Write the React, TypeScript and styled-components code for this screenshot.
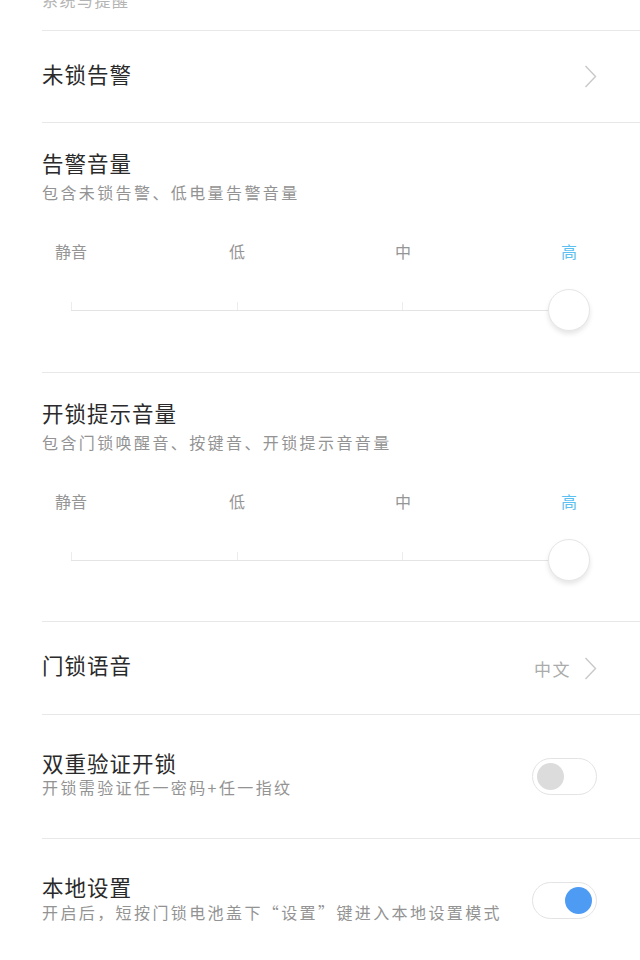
import styled, { createGlobalStyle } from 'styled-components';

const GlobalStyle = createGlobalStyle`
  body {
    margin: 0;
    background: #ffffff;
    font-family: 'Noto Sans CJK SC', 'Noto Sans', sans-serif;
    overflow: hidden;
  }
`;

const LEVELS = ['静音', '低', '中', '高'];

const Chevron = () => (
  <svg width='13' height='23' viewBox='0 0 13 23'>
    <polyline
      points='1.5,1 11.5,11.5 1.5,22'
      fill='none'
      stroke='#c9c9c9'
      strokeWidth='1.4'
    />
  </svg>
);

const VolumeSlider = ({ value }: { value: number }) => (
  <>
    <Labels>
      {LEVELS.map((label, i) => (
        <Level key={label} active={i === value}>
          {label}
        </Level>
      ))}
    </Labels>
    <SliderArea>
      <Track />
      <Ticks>
        {LEVELS.map((label) => (
          <Tick key={label} />
        ))}
      </Ticks>
      <Thumb style={{ left: `${(value / (LEVELS.length - 1)) * 100}%` }} />
    </SliderArea>
  </>
);

const App = () => {
  return (
    <Page>
      <GlobalStyle />
      <Header>系统与提醒</Header>

      <Row height={91}>
        <RowTitle>未锁告警</RowTitle>
        <Right>
          <Chevron />
        </Right>
      </Row>

      <Section bottom={41}>
        <TextBlock gap={6}>
          <Title>告警音量</Title>
          <Sub>包含未锁告警、低电量告警音量</Sub>
        </TextBlock>
        <VolumeSlider value={3} />
      </Section>

      <Section bottom={40}>
        <TextBlock gap={6}>
          <Title>开锁提示音量</Title>
          <Sub>包含门锁唤醒音、按键音、开锁提示音音量</Sub>
        </TextBlock>
        <VolumeSlider value={3} />
      </Section>

      <Row height={92}>
        <RowTitle>门锁语音</RowTitle>
        <Right>
          <Value>中文</Value>
          <Chevron />
        </Right>
      </Row>

      <Row height={123}>
        <TextBlock gap={1} lift={6}>
          <Title>双重验证开锁</Title>
          <Sub>开锁需验证任一密码+任一指纹</Sub>
        </TextBlock>
        <Toggle on={false}>
          <Knob on={false} />
        </Toggle>
      </Row>

      <Row height={123} last>
        <TextBlock gap={2} lift={6}>
          <Title>本地设置</Title>
          <Sub>开启后，短按门锁电池盖下“设置”键进入本地设置模式</Sub>
        </TextBlock>
        <Toggle on={true}>
          <Knob on={true} />
        </Toggle>
      </Row>
    </Page>
  );
};

export default App;

const Page = styled.div`
  display: flex;
  flex-direction: column;
  padding-left: 42px;
  width: 640px;
  box-sizing: border-box;
`;

const Header = styled.div`
  margin-top: -11px;
  padding-bottom: 19px;
  font-size: 16px;
  line-height: 22px;
  letter-spacing: 1.5px;
  color: #b4b4b4;
  border-bottom: 1px solid #e8e8e8;
`;

const Row = styled.div<{ height: number; last?: boolean }>`
  display: flex;
  flex-direction: row;
  align-items: center;
  justify-content: space-between;
  height: ${({ height }) => height}px;
  padding-right: 43px;
  border-bottom: ${({ last }) => (last ? 'none' : '1px solid #e8e8e8')};
`;

const Section = styled.div<{ bottom: number }>`
  display: flex;
  flex-direction: column;
  padding: 27px 43px ${({ bottom }) => bottom}px 0;
  border-bottom: 1px solid #e8e8e8;
`;

const TextBlock = styled.div<{ gap: number; lift?: number }>`
  display: flex;
  flex-direction: column;
  gap: ${({ gap }) => gap}px;
  padding-bottom: ${({ lift }) => lift || 0}px;
`;

const Title = styled.div`
  font-size: 21.5px;
  line-height: 26px;
  letter-spacing: 1px;
  color: #2a2a2a;
`;

const RowTitle = styled(Title)`
  padding-bottom: 6px;
`;

const Sub = styled.div`
  font-size: 16px;
  line-height: 20px;
  letter-spacing: 2.4px;
  color: #939393;
`;

const Right = styled.div`
  display: flex;
  flex-direction: row;
  align-items: center;
  gap: 13px;
`;

const Value = styled.span`
  font-size: 17px;
  letter-spacing: 1.5px;
  color: #ababab;
`;

const Labels = styled.div`
  display: flex;
  flex-direction: row;
  justify-content: space-between;
  margin: 39px 8px 0 9px;
`;

const Level = styled.div<{ active: boolean }>`
  width: 40px;
  text-align: center;
  font-size: 16px;
  line-height: 20px;
  color: ${({ active }) => (active ? '#5cc0f0' : '#959595')};
`;

const SliderArea = styled.div`
  position: relative;
  height: 42px;
  margin: 28px 28px 0 29px;
`;

const Track = styled.div`
  position: absolute;
  left: 0;
  right: 0;
  top: 21px;
  height: 1px;
  background: #e4e4e4;
`;

const Ticks = styled.div`
  position: absolute;
  left: 0;
  right: 0;
  top: 13px;
  display: flex;
  flex-direction: row;
  justify-content: space-between;
`;

const Tick = styled.div`
  width: 1px;
  height: 8px;
  background: #ececec;
`;

const Thumb = styled.div`
  position: absolute;
  top: 0;
  width: 42px;
  height: 42px;
  box-sizing: border-box;
  border-radius: 50%;
  background: #ffffff;
  border: 1px solid #e6e6e6;
  box-shadow: 0 3px 5px rgba(0, 0, 0, 0.1);
  transform: translateX(-50%);
`;

const Toggle = styled.div<{ on: boolean }>`
  display: flex;
  flex-direction: row;
  align-items: center;
  justify-content: ${({ on }) => (on ? 'flex-end' : 'flex-start')};
  width: 65px;
  height: 37px;
  box-sizing: border-box;
  padding: 0 4px;
  border: 1px solid #e3e3e3;
  border-radius: 19px;
  background: #ffffff;
`;

const Knob = styled.div<{ on: boolean }>`
  width: 27px;
  height: 27px;
  border-radius: 50%;
  background: ${({ on }) => (on ? '#4e9bf3' : '#dcdcdc')};
`;
